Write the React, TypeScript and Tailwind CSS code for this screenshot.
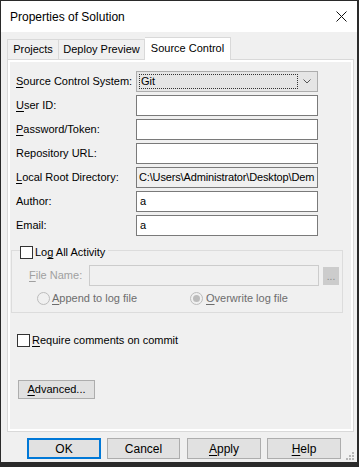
import React from 'react';

const font = { fontFamily: '"Liberation Sans", Arial, sans-serif' };

function U({ children }: { children: React.ReactNode }) {
  return <span className="underline underline-offset-2">{children}</span>;
}

function Field({ label, value, readOnly }: { label: React.ReactNode; value?: string; readOnly?: boolean }) {
  return (
    <div className="flex h-[21px] items-center">
      <div className="w-[120px] whitespace-nowrap text-[11px] text-black">{label}</div>
      <div
        className={`flex h-[21px] w-[182px] items-center overflow-hidden whitespace-nowrap border border-[#7a7a7a] text-[11px] text-black ${
          readOnly ? 'bg-[#f0f0f0] px-[2px] tracking-[-0.15px]' : 'bg-white px-[3px]'
        }`}
      >
        {value}
      </div>
    </div>
  );
}

function Checkbox() {
  return <div className="h-[13px] w-[13px] shrink-0 border border-[#333] bg-white" />;
}

function Radio({ checked }: { checked?: boolean }) {
  return (
    <div className="flex h-[13px] w-[13px] shrink-0 items-center justify-center rounded-full border border-[#bcbcbc] bg-[#f0f0f0]">
      {checked && <div className="h-[7px] w-[7px] rounded-full bg-[#bcbcbc]" />}
    </div>
  );
}

function Button({ children, primary, className = '' }: { children: React.ReactNode; primary?: boolean; className?: string }) {
  return (
    <div
      className={`flex items-center justify-center bg-[#e1e1e1] text-[12px] text-black ${
        primary ? 'border-2 border-[#0078d7]' : 'border border-[#adadad]'
      } ${className}`}
    >
      {children}
    </div>
  );
}

export default function App() {
  return (
    <div className="h-[467px] w-[359px] overflow-hidden bg-[#2a2a2a]" style={font}>
      <div className="ml-[1px] mt-[1px] flex h-[461px] w-[356px] flex-col bg-[#f0f0f0]">
        {/* title bar */}
        <div className="flex h-[31px] shrink-0 items-center justify-between bg-white pl-[9px] pr-[10px]">
          <span className="text-[12px] text-black">Properties of Solution</span>
          <svg width="11" height="11" viewBox="0 0 11 11">
            <path d="M0.5 0.5 L10.5 10.5 M10.5 0.5 L0.5 10.5" stroke="#111" strokeWidth="1" />
          </svg>
        </div>

        {/* tabs */}
        <div className="flex h-[27px] items-end pl-[6px]">
          <div className="flex h-[20px] w-[52px] items-center justify-center border border-b-0 border-[#d9d9d9] text-[11px] text-black">
            Projects
          </div>
          <div className="flex h-[20px] w-[86px] items-center justify-center border border-b-0 border-l-0 border-[#d9d9d9] text-[11px] text-black">
            Deploy Preview
          </div>
          <div className="relative z-10 -mb-[1px] flex h-[23px] w-[86px] items-center justify-center border border-b-0 border-l-0 border-[#d9d9d9] bg-white pb-[2px] text-[11px] text-black">
            Source Control
          </div>
        </div>

        {/* panel */}
        <div className="ml-[6px] h-[373px] w-[347px] border border-[#d9d9d9] bg-white p-[2px]">
          <div className="flex h-full flex-col bg-[#f0f0f0] pl-[6px] pt-[9px]">
            <div className="flex flex-col gap-[3px]">
              <div className="flex h-[21px] items-center">
                <div className="w-[120px] whitespace-nowrap text-[11px] text-black">
                  <U>S</U>ource Control System:
                </div>
                <div className="flex h-[21px] w-[182px] items-center border border-[#adadad] bg-[#e5e5e5] p-[2px]">
                  <div className="flex h-full flex-1 items-center border border-dotted border-[#333] px-[1px] text-[11px] text-black">
                    Git
                  </div>
                  <div className="flex w-[17px] justify-center">
                    <svg width="8" height="5" viewBox="0 0 8 5">
                      <path d="M0.5 0.5 L4 4 L7.5 0.5" stroke="#555" fill="none" strokeWidth="1" />
                    </svg>
                  </div>
                </div>
              </div>
              <Field label={<><U>U</U>ser ID:</>} />
              <Field label={<><U>P</U>assword/Token:</>} />
              <Field label="Repository URL:" />
              <Field label={<><U>L</U>ocal Root Directory:</>} value="C:\Users\Administrator\Desktop\Dem" readOnly />
              <Field label="Author:" value="a" />
              <Field label="Email:" value="a" />
            </div>

            {/* group box */}
            <div className="relative ml-[-5px] mt-[14px] h-[63px] w-[332px] border border-[#dcdcdc]">
              <div className="absolute left-[8px] top-[-7px] flex items-center gap-[2px] bg-[#f0f0f0] pr-[3px]">
                <Checkbox />
                <span className="text-[11px] text-black">
                  Lo<U>g</U> All Activity
                </span>
              </div>
              <div className="ml-[17px] mt-[14px] flex h-[21px] items-center">
                <span className="w-[60px] text-[11px] text-[#a0a0a0]">
                  <U>F</U>ile Name:
                </span>
                <div className="h-[21px] w-[230px] border border-[#cccccc] bg-[#f0f0f0]" />
                <div className="ml-[4px] flex h-[18px] w-[16px] items-end justify-center bg-[#cccccc] pb-[3px] text-[10px] leading-none text-[#8a8a8a]">
                  ...
                </div>
              </div>
              <div className="ml-[25px] mt-[5px] flex h-[14px] items-center">
                <div className="flex w-[153px] items-center gap-[2px]">
                  <Radio />
                  <span className="text-[11px] text-[#6d6d6d]">
                    <U>A</U>ppend to log file
                  </span>
                </div>
                <div className="flex items-center gap-[3px]">
                  <Radio checked />
                  <span className="text-[11px] text-[#6d6d6d]">
                    <U>O</U>verwrite log file
                  </span>
                </div>
              </div>
            </div>

            <div className="ml-[1px] mt-[19px] flex items-center gap-[2px]">
              <Checkbox />
              <span className="text-[11px] text-black">
                <U>R</U>equire comments on commit
              </span>
            </div>

            <Button className="ml-[2px] mt-[31px] h-[19px] w-[77px] !text-[11px]">
              <span>
                <U>A</U>dvanced...
              </span>
            </Button>
          </div>
        </div>

        {/* footer buttons */}
        <div className="relative flex flex-1 pl-[26px] pt-[6px]">
          <div className="flex gap-[6px]">
            <Button primary className="h-[21px] w-[74px]">OK</Button>
            <Button className="h-[21px] w-[73px]">Cancel</Button>
            <Button className="ml-[1px] h-[21px] w-[74px]">
              <span>
                <U>A</U>pply
              </span>
            </Button>
            <Button className="h-[21px] w-[74px]">
              <span>
                <U>H</U>elp
              </span>
            </Button>
          </div>
          <svg className="absolute bottom-[1px] right-[2px]" width="10" height="10" viewBox="0 0 10 10">
            <rect x="7" y="1" width="2" height="2" fill="#b5b5b5" />
            <rect x="4" y="4" width="2" height="2" fill="#b5b5b5" />
            <rect x="7" y="4" width="2" height="2" fill="#b5b5b5" />
            <rect x="1" y="7" width="2" height="2" fill="#b5b5b5" />
            <rect x="4" y="7" width="2" height="2" fill="#b5b5b5" />
            <rect x="7" y="7" width="2" height="2" fill="#b5b5b5" />
          </svg>
        </div>
      </div>
    </div>
  );
}
